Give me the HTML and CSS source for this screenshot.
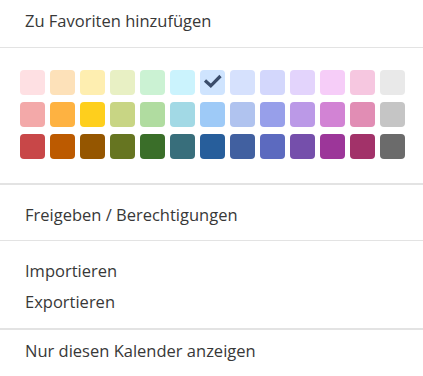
FILE: index.html
```html
<!DOCTYPE html>
<html lang="de">
<head>
<meta charset="utf-8">
<link rel="stylesheet" href="styles.css">
</head>
<body>
<div class="menu">
  <div class="section top">
    <div class="item">Zu Favoriten hinzufügen</div>
  </div>
  <div class="section colors">
    <div class="grid">
      <span class="sw" style="background:#fee0e3"></span>
      <span class="sw" style="background:#fde1b9"></span>
      <span class="sw" style="background:#feeeb0"></span>
      <span class="sw" style="background:#e8f0c4"></span>
      <span class="sw" style="background:#cbf2d3"></span>
      <span class="sw" style="background:#cbf3fd"></span>
      <span class="sw" style="background:#cfe4fe"><svg class="check" viewBox="0 0 25 25" width="25" height="25"><path d="M5 10.5 L10.8 15.8 L20.5 6" fill="none" stroke="#3b4d6b" stroke-width="3.2"/></svg></span>
      <span class="sw" style="background:#d6e1fd"></span>
      <span class="sw" style="background:#d3d7fc"></span>
      <span class="sw" style="background:#e3d4fc"></span>
      <span class="sw" style="background:#f6cdf8"></span>
      <span class="sw" style="background:#f6c7e0"></span>
      <span class="sw" style="background:#e9e9e9"></span>

      <span class="sw" style="background:#f3a9a9"></span>
      <span class="sw" style="background:#feb241"></span>
      <span class="sw" style="background:#fecf1d"></span>
      <span class="sw" style="background:#c8d584"></span>
      <span class="sw" style="background:#b0dca0"></span>
      <span class="sw" style="background:#a2d9e5"></span>
      <span class="sw" style="background:#9ecaf7"></span>
      <span class="sw" style="background:#b0c3ef"></span>
      <span class="sw" style="background:#979fea"></span>
      <span class="sw" style="background:#bb99e7"></span>
      <span class="sw" style="background:#d283d4"></span>
      <span class="sw" style="background:#e18db4"></span>
      <span class="sw" style="background:#c5c5c5"></span>

      <span class="sw" style="background:#c84748"></span>
      <span class="sw" style="background:#bc5a00"></span>
      <span class="sw" style="background:#955600"></span>
      <span class="sw" style="background:#667521"></span>
      <span class="sw" style="background:#3a6e29"></span>
      <span class="sw" style="background:#386e7b"></span>
      <span class="sw" style="background:#275e9b"></span>
      <span class="sw" style="background:#4160a0"></span>
      <span class="sw" style="background:#5c6abf"></span>
      <span class="sw" style="background:#754fab"></span>
      <span class="sw" style="background:#9c3699"></span>
      <span class="sw" style="background:#a23269"></span>
      <span class="sw" style="background:#6b6b6b"></span>
    </div>
  </div>
  <div class="section share">
    <div class="item">Freigeben / Berechtigungen</div>
  </div>
  <div class="section io">
    <div class="item">Importieren</div>
    <div class="item">Exportieren</div>
  </div>
  <div class="section only">
    <div class="item">Nur diesen Kalender anzeigen</div>
  </div>
</div>
</body>
</html>
```
FILE: styles.css
```css
html, body {
  margin: 0;
  padding: 0;
  background: #fff;
}
.menu {
  width: 423px;
  font-family: "Open Sans", "Noto Sans", sans-serif;
  font-size: 16.5px;
  line-height: 20px;
  color: #383838;
}
.section {
  border-top: 1px solid #e3e3e3;
}
.section.top {
  border-top: none;
  padding: 11px 0 16px;
}
.section.colors {
  padding: 22px 0 24px 20px;
  border-bottom: 1px solid #e3e3e3;
}
.section.share {
  padding: 20px 0 15px;
}
.section.io {
  padding: 20px 0 16px;
  display: flex;
  flex-direction: column;
  gap: 11px;
  border-bottom: 1px solid #e3e3e3;
}
.section.only {
  padding: 11px 0 25px;
}
.item {
  padding-left: 25px;
}
.grid {
  display: grid;
  grid-template-columns: repeat(13, 25px);
  grid-auto-rows: 25px;
  column-gap: 5px;
  row-gap: 7px;
}
.sw {
  display: block;
  width: 25px;
  height: 25px;
  border-radius: 4px;
}
.check {
  display: block;
}
```
